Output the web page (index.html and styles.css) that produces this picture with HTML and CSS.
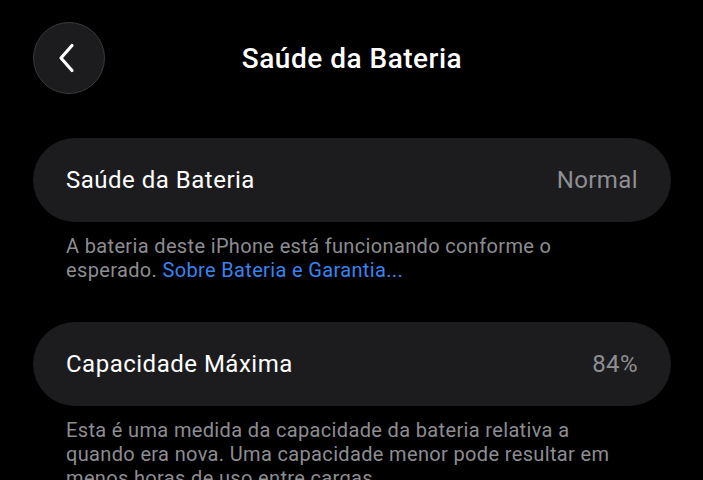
FILE: index.html
```html
<!DOCTYPE html>
<html lang="pt">
<head>
<meta charset="utf-8">
<link rel="stylesheet" href="styles.css">
</head>
<body>
<div class="page">
  <header class="nav">
    <button class="back" aria-label="Voltar">
      <svg width="20" height="30" viewBox="0 0 20 30"><path d="M15 2.5 L4 15 L15 27.5" fill="none" stroke="#fff" stroke-width="3.2" stroke-linecap="round" stroke-linejoin="round"/></svg>
    </button>
    <h1 class="title">Saúde da Bateria</h1>
    <span class="spacer"></span>
  </header>

  <section class="group">
    <div class="card"><span class="label">Saúde da Bateria</span><span class="value">Normal</span></div>
    <p class="note">A bateria deste iPhone está funcionando conforme o<br>esperado. <a class="link" href="#">Sobre Bateria e Garantia...</a></p>
  </section>

  <section class="group">
    <div class="card"><span class="label">Capacidade Máxima</span><span class="value">84%</span></div>
    <p class="note">Esta é uma medida da capacidade da bateria relativa a<br>quando era nova. Uma capacidade menor pode resultar em<br>menos horas de uso entre cargas.</p>
  </section>
</div>
</body>
</html>
```
FILE: styles.css
```css
html, body {
  margin: 0;
  background: #000;
  height: 100%;
  overflow: hidden;
}
.page {
  padding: 22px 32px 0 33px;
  font-family: Roboto, "Liberation Sans", sans-serif;
  color: #fff;
}
.nav {
  display: grid;
  grid-template-columns: 72px 1fr 72px;
  align-items: center;
  height: 72px;
}
.back {
  width: 72px;
  height: 72px;
  border-radius: 50%;
  background: #1c1c1e;
  border: 1px solid #3a3a3c;
  display: flex;
  align-items: center;
  justify-content: center;
  padding: 0 4px 0 0;
  box-sizing: border-box;
}
.title {
  margin: 0;
  text-align: center;
  font-size: 28px;
  font-weight: 500;
  letter-spacing: 0.5px;
}
.group {
  margin-top: 44px;
}
.group + .group {
  margin-top: 40px;
}
.card {
  height: 84px;
  border-radius: 42px;
  background: #1c1c1e;
  display: flex;
  align-items: center;
  justify-content: space-between;
  padding: 0 33px;
}
.label {
  font-size: 24px;
  color: #fff;
  letter-spacing: 0.5px;
}
.value {
  font-size: 24px;
  color: #8e8e93;
  letter-spacing: 0.4px;
}
.note {
  margin: 12px 0 0 33px;
  font-size: 20px;
  line-height: 24px;
  color: #8d8d92;
  letter-spacing: 0.35px;
}
.link {
  color: #3b82f0;
  text-decoration: none;
}
```
